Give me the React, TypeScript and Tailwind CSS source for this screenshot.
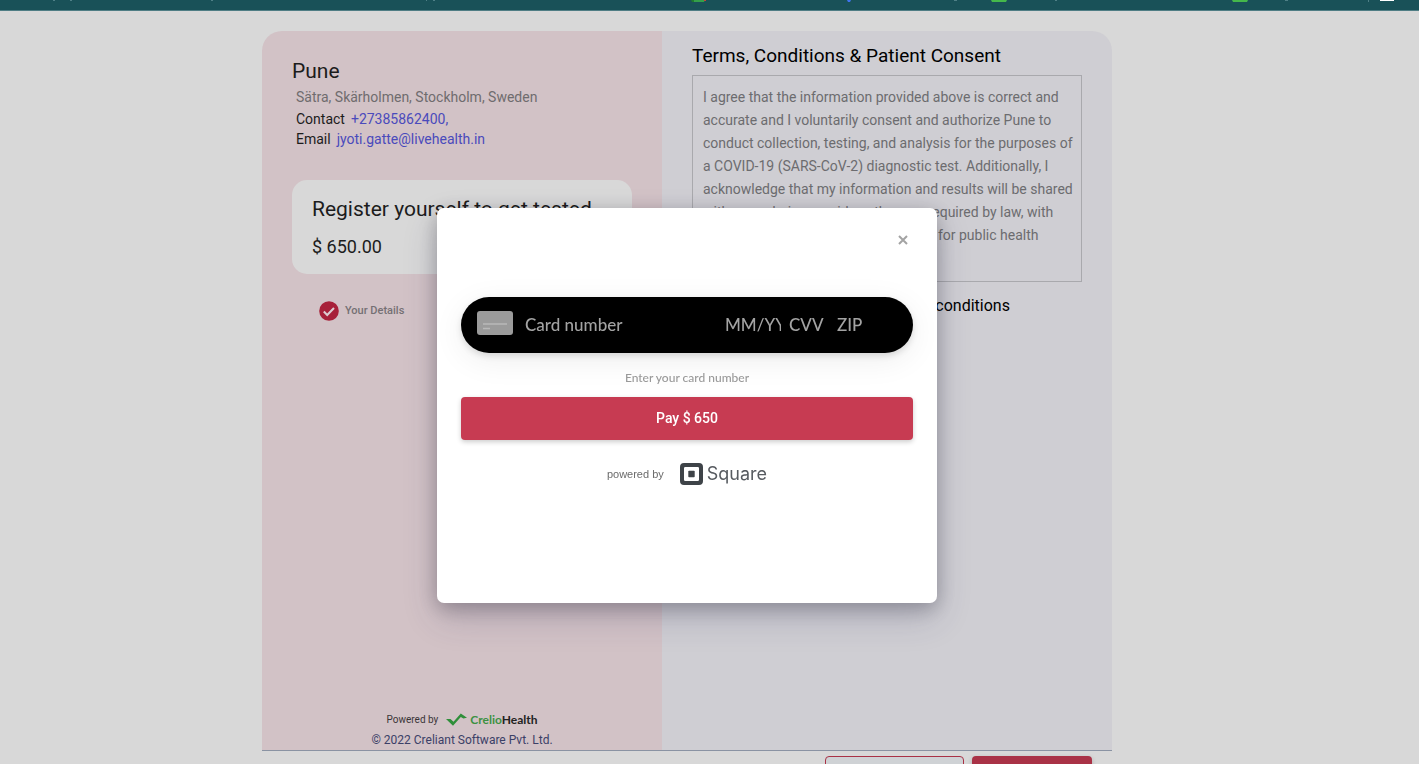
import React from "react";

function TopBar() {
  return (
    <header className="h-[11px] shrink-0 overflow-hidden border-b border-[#4f7d84] bg-[#195158]">
      <svg width="1419" height="10" viewBox="0 0 1419 10" aria-hidden="true">
        <g fill="#4f8087">
          <rect x="53" width="2" height="1" />
          <rect x="70" width="2" height="1" />
          <rect x="211" width="2" height="1" />
          <rect x="426" width="1" height="1" />
          <rect x="433" width="2" height="1" />
          <rect x="954" width="3" height="1" />
          <rect x="1055" width="2" height="1" />
          <rect x="1285" width="3" height="1" />
          <rect x="1368" width="1" height="2" />
        </g>
        <path d="M691 0h4v2h-3z" fill="#1f7a2e" />
        <path d="M694 0h11l-1 2h-10z" fill="#34a04a" />
        <rect x="704" width="2" height="1" fill="#c5443c" />
        <path d="M847 0h4l-1 2h-2z" fill="#3f73f0" />
        <path d="M991 0h16l-1 2h-14z" fill="#45b84b" />
        <path d="M1232 0h16l-1 2h-14z" fill="#45b84b" />
        <rect x="1380" width="14" height="1" fill="#ffffff" />
      </svg>
    </header>
  );
}

function PatientPanel() {
  return (
    <section className="flex min-w-0 flex-col rounded-tl-[20px] bg-[#d2c2c6] px-[30px] pt-[26px]">
      <h1 className="text-[21px] leading-7 text-[#1c1c1c]">Pune</h1>
      <div className="mt-0.5 pl-1 text-[14px] leading-5 text-[#1c1c1c]">
        <p className="mb-0.5 text-[#6f6c6e]">Sätra, Skärholmen, Stockholm, Sweden</p>
        <p>
          Contact
          <a href="tel:+27385862400" className="ml-1.5 text-[#4a4abc]">+27385862400,</a>
        </p>
        <p>
          Email
          <a href="mailto:jyoti.gatte@livehealth.in" className="ml-1.5 text-[#4a4abc]">jyoti.gatte@livehealth.in</a>
        </p>
      </div>
      <div className="mt-[31px] h-[94px] rounded-[15px] bg-[#d8d8d8] px-5 pt-[15px] text-[#1c1c1c]">
        <h2 className="whitespace-nowrap text-[21px] leading-7">Register yourself to get tested</h2>
        <p className="mt-3 text-[18px] leading-6">$ 650.00</p>
      </div>
      <div className="ml-[27px] mt-[27px] flex items-center gap-1.5">
        <svg width="20" height="20" viewBox="0 0 20 20" aria-hidden="true">
          <circle cx="10" cy="10" r="9.8" fill="#a72039" />
          <path d="M4.8 10.6l3.4 3.3 6.8-6.9" fill="none" stroke="#dccbd0" strokeWidth="2.1" />
        </svg>
        <span className="text-[11px] font-medium leading-5 text-[#757074]">Your Details</span>
      </div>
      <div className="mt-auto flex flex-col items-center">
        <div className="flex items-center gap-2 leading-5">
          <span className="text-[10px] text-[#3a3538]">Powered by</span>
          <span className="flex items-center gap-0.5">
            <svg width="22" height="14" viewBox="0 0 22 14" aria-hidden="true">
              <path d="M0 6h4.500l3 2.800L14.800.6 21 4.700 17.400 5.600 14.800 4 7 12.800z" fill="#2f8f3a" />
            </svg>
            <span className="font-['Lato',sans-serif] text-[12px] font-bold text-[#222222]">
              <span className="text-[#3c9142]">Crelio</span>Health
            </span>
          </span>
        </div>
        <p className="text-[12px] leading-5 text-[#3b4067]">© 2022 Creliant Software Pvt. Ltd.</p>
      </div>
    </section>
  );
}

function ConsentPanel() {
  return (
    <section className="flex min-w-0 flex-col rounded-tr-[20px] bg-[#cfced3] px-[30px] pt-[13px]">
      <h2 className="text-[19px] leading-6 text-black">Terms, Conditions &amp; Patient Consent</h2>
      <div className="mt-[7px] h-[207px] border border-[#a9a9ad] py-2.5 pl-2.5 pr-1.5 text-[14px] leading-[23px] text-[#6c6c6f]">
        I agree that the information provided above is correct and accurate and I voluntarily consent and authorize
        Pune to conduct collection, testing, and analysis for the purposes of a COVID-19 (SARS-CoV-2) diagnostic
        test. Additionally, I acknowledge that my information and results will be shared with my ordering provider,
        others as required by law, with the relevant health authorities or CDC for public health purposes.
      </div>
      <label className="mt-3 flex items-center gap-2 text-[16px] leading-6 text-black">
        <input type="checkbox" defaultChecked className="size-4" />
        I have agreed to the terms and conditions
      </label>
    </section>
  );
}

function PaymentDialog() {
  const field =
    "bg-transparent p-0 font-['Lato',sans-serif] text-[17px] font-medium leading-6 text-white outline-none placeholder:text-[#a3a3a3] placeholder:opacity-100";
  return (
    <div className="fixed inset-0 flex items-start justify-center pr-[45px] pt-52">
      <div
        role="dialog"
        aria-label="Card payment"
        className="flex h-[395px] w-[500px] flex-col rounded-[7px] bg-white px-6 pt-5 shadow-[0_15px_35px_rgba(50,50,93,0.2),0_5px_20px_rgba(0,0,0,0.25)]"
      >
        <button type="button" aria-label="Close" className="flex h-6 w-5 items-center justify-center self-end">
          <svg width="10" height="10" viewBox="0 0 10 10" aria-hidden="true">
            <path d="M1 1l8 8M9 1l-8 8" stroke="#a3a3a3" strokeWidth="2" />
          </svg>
        </button>
        <form className="mt-[45px] flex flex-col" onSubmit={(event) => event.preventDefault()}>
          <div className="flex h-14 items-center rounded-full bg-black px-4 shadow-[0_7px_32px_rgba(0,0,0,0.07),0_3px_6px_rgba(0,0,0,0.12)]">
            <svg width="36" height="24" viewBox="0 0 36 24" aria-hidden="true" className="mb-1 shrink-0">
              <rect width="36" height="24" rx="3" fill="#9b9b9b" />
              <path d="M6 13h24M6 17.500h7" stroke="#b9b9b9" strokeWidth="1.6" />
            </svg>
            <input aria-label="Card number" placeholder="Card number" className={`${field} ml-3 w-40 flex-1`} />
            <input aria-label="Expiry date" placeholder="MM/YY" className={`${field} w-14`} />
            <input aria-label="CVV" placeholder="CVV" className={`${field} ml-2 w-10`} />
            <input aria-label="ZIP code" placeholder="ZIP" className={`${field} ml-2 w-15`} />
          </div>
          <p className="mt-4 text-center font-['Lato',sans-serif] text-[12px] font-medium leading-[18px] text-[#999999]">
            Enter your card number
          </p>
          <button
            type="submit"
            className="mt-2.5 h-[43px] rounded bg-[#c73b52] text-[14px] font-medium text-white shadow-[0_2px_5px_rgba(0,0,0,0.2)]"
          >
            Pay $ 650
          </button>
        </form>
        <div className="mt-[22px] flex items-center justify-center gap-4">
          <span className="font-['Liberation_Sans',sans-serif] text-[11px] leading-6 text-[#6b6b6b]">powered by</span>
          <span className="flex items-center gap-1">
            <svg width="23" height="22" viewBox="0 0 23 22" aria-hidden="true">
              <path
                fill="#3e4348"
                fillRule="evenodd"
                d="M4 0h15a4 4 0 0 1 4 4v14a4 4 0 0 1-4 4H4a4 4 0 0 1-4-4V4a4 4 0 0 1 4-4zM5.200 4Q4 4 4 5.200v11.600Q4 18 5.200 18h12.600Q19 18 19 16.800V5.200Q19 4 17.800 4z"
              />
              <rect x="8.300" y="7.800" width="6.400" height="6.400" rx="0.800" fill="#3e4348" />
            </svg>
            <span className="font-['Inter',sans-serif] text-[18px] leading-6 text-[#575b60]">Square</span>
          </span>
        </div>
      </div>
    </div>
  );
}

export default function App() {
  return (
    <div className="flex h-screen flex-col overflow-hidden bg-[#d8d8d8] font-['Roboto',sans-serif]">
      <TopBar />
      <main className="flex min-h-0 flex-1 flex-col items-center pr-[45px] pt-5">
        <div className="grid min-h-0 w-full max-w-[850px] flex-1 grid-cols-[8fr_9fr]">
          <PatientPanel />
          <ConsentPanel />
        </div>
        <footer className="flex h-[14px] w-full max-w-[850px] shrink-0 justify-end gap-2 border-t border-[#8a93a3] pr-5 pt-[5px]">
          <button
            type="button"
            aria-label="Previous"
            className="h-9 w-[139px] rounded border border-[#a93246] bg-[#cfd2d5]"
          />
          <button
            type="button"
            aria-label="Continue"
            className="h-9 w-[120px] rounded bg-[#a93246] shadow-[0_2px_5px_rgba(0,0,0,0.2)]"
          />
        </footer>
      </main>
      <PaymentDialog />
    </div>
  );
}
